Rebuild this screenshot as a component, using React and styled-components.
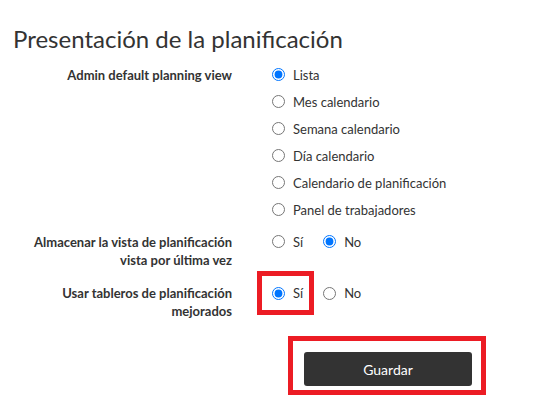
import React, { useState } from "react";
import styled, { createGlobalStyle } from "styled-components";

const GlobalStyle = createGlobalStyle`
  html, body { margin: 0; padding: 0; background: #fff; }
  body { font-family: Lato, "Open Sans", Arial, sans-serif; color: #333; min-height: 100vh; }
`;

const Page = styled.div`
  padding: 0 0 14px 13px;
  width: 536px;
`;

const Title = styled.h2`
  margin: 24px 0 0;
  font-size: 24px;
  line-height: 29px;
  font-weight: 400;
  color: #333;
`;

const Form = styled.form`
  margin-top: 8px;
  display: flex;
  flex-direction: column;
  align-items: flex-start;
`;

const Row = styled.div`
  display: grid;
  grid-template-columns: 219px auto;
  column-gap: 40px;
  align-items: start;
  margin-top: ${(p) => p.$space || 0}px;
`;

const Label = styled.div`
  text-align: right;
  font-size: 13px;
  line-height: 18px;
  font-weight: 700;
  color: #333;
  padding-top: 4.5px;
`;

const OptionList = styled.div`
  display: flex;
  flex-direction: ${(p) => (p.$inline ? "row" : "column")};
  align-items: flex-start;
  gap: ${(p) => (p.$inline ? "20px" : "0")};
`;

const Option = styled.label`
  display: flex;
  align-items: center;
  gap: 8px;
  height: 27px;
  font-size: 13px;
  color: #333;
  cursor: pointer;
`;

const Highlight = styled.span`
  position: relative;
  display: inline-flex;
  align-self: flex-start;
  &::after {
    content: "";
    position: absolute;
    top: ${(p) => p.$t}px;
    left: ${(p) => p.$l}px;
    right: ${(p) => p.$r}px;
    bottom: ${(p) => p.$b}px;
    border: 5px solid #ec1c24;
    pointer-events: none;
  }
`;

const Radio = styled.input.attrs({ type: "radio" })`
  margin: 0;
  width: 13px;
  height: 13px;
`;

const Actions = styled.div`
  margin: 32px 0 0 291px;
  display: flex;
  align-items: flex-start;
`;

const SaveButton = styled.button`
  display: block;
  width: 168px;
  height: 34px;
  border: none;
  border-radius: 3px;
  background: #333;
  color: #fff;
  font-family: Lato, "Open Sans", Arial, sans-serif;
  font-size: 14px;
  cursor: pointer;
`;

function RadioGroup({ name, options, value, onChange, inline, highlight }) {
  return (
    <OptionList $inline={inline}>
      {options.map((o) => {
        const opt = (
          <Option key={o}>
            <Radio name={name} checked={value === o} onChange={() => onChange(o)} />
            {o}
          </Option>
        );
        return highlight === o ? (
          <Highlight key={o} $t={-8.5} $l={-15} $r={-11} $b={-8.5}>
            {opt}
          </Highlight>
        ) : (
          opt
        );
      })}
    </OptionList>
  );
}

export default function App() {
  const [view, setView] = useState("Lista");
  const [store, setStore] = useState("No");
  const [boards, setBoards] = useState("Sí");
  return (
    <Page>
      <GlobalStyle />
      <Title>Presentación de la planificación</Title>
      <Form onSubmit={(e) => e.preventDefault()}>
        <Row>
          <Label>Admin default planning view</Label>
          <RadioGroup
            name="view"
            value={view}
            onChange={setView}
            options={[
              "Lista",
              "Mes calendario",
              "Semana calendario",
              "Día calendario",
              "Calendario de planificación",
              "Panel de trabajadores",
            ]}
          />
        </Row>
        <Row $space={5}>
          <Label>Almacenar la vista de planificación vista por última vez</Label>
          <RadioGroup name="store" inline value={store} onChange={setStore} options={["Sí", "No"]} />
        </Row>
        <Row $space={11}>
          <Label>Usar tableros de planificación mejorados</Label>
          <RadioGroup
            name="boards"
            inline
            value={boards}
            onChange={setBoards}
            options={["Sí", "No"]}
            highlight="Sí"
          />
        </Row>
        <Actions>
          <Highlight $t={-16} $l={-16} $r={-14} $b={-9}>
            <SaveButton type="submit">Guardar</SaveButton>
          </Highlight>
        </Actions>
      </Form>
    </Page>
  );
}
